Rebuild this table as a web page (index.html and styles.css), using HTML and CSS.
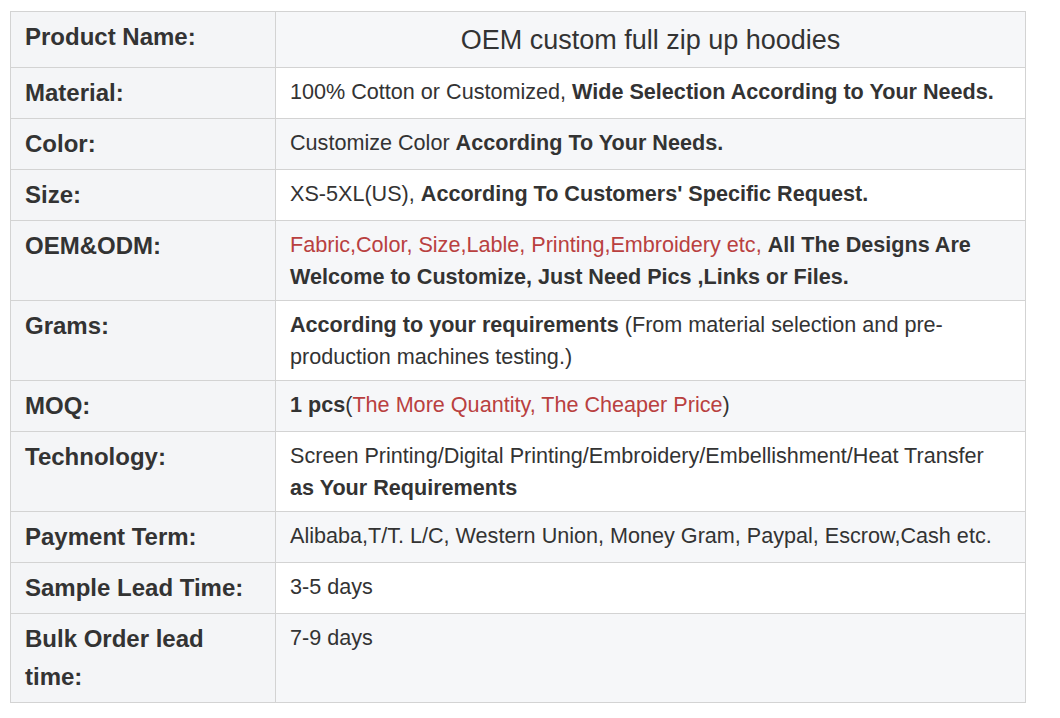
FILE: index.html
```html
<!DOCTYPE html>
<html>
<head>
<meta charset="utf-8">
<link rel="stylesheet" href="styles.css">
</head>
<body>
<table class="spec">
  <tr class="odd">
    <th>Product Name:</th>
    <td class="title">OEM custom full zip up hoodies</td>
  </tr>
  <tr>
    <th>Material:</th>
    <td>100% Cotton or Customized, <b>Wide Selection According to Your Needs.</b></td>
  </tr>
  <tr class="odd">
    <th>Color:</th>
    <td>Customize Color <b>According To Your Needs.</b></td>
  </tr>
  <tr>
    <th>Size:</th>
    <td>XS-5XL(US), <b>According To Customers' Specific Request.</b></td>
  </tr>
  <tr class="odd">
    <th>OEM&amp;ODM:</th>
    <td><span class="red">Fabric,Color, Size,Lable, Printing,Embroidery etc,</span> <b>All The Designs Are Welcome to Customize, Just Need Pics ,Links or Files.</b></td>
  </tr>
  <tr>
    <th>Grams:</th>
    <td><b>According to your requirements</b> (From material selection and pre-production machines testing.)</td>
  </tr>
  <tr class="odd">
    <th>MOQ:</th>
    <td><b>1 pcs</b>(<span class="red">The More Quantity, The Cheaper Price</span>)</td>
  </tr>
  <tr>
    <th>Technology:</th>
    <td>Screen Printing/Digital Printing/Embroidery/Embellishment/Heat Transfer <b>as Your Requirements</b></td>
  </tr>
  <tr class="odd">
    <th>Payment Term:</th>
    <td>Alibaba,T/T. L/C, Western Union, Money Gram, Paypal, Escrow,Cash etc.</td>
  </tr>
  <tr>
    <th>Sample Lead Time:</th>
    <td>3-5 days</td>
  </tr>
  <tr class="odd">
    <th>Bulk Order lead time:</th>
    <td>7-9 days</td>
  </tr>
</table>
</body>
</html>
```
FILE: styles.css
```css
html, body {
  margin: 0;
  padding: 0;
  background: #ffffff;
}
body {
  padding: 11px 10px;
  font-family: "Liberation Sans", Arial, sans-serif;
  color: #333333;
}
.spec {
  border-collapse: collapse;
  width: 1016px;
  table-layout: fixed;
}
.spec th,
.spec td {
  border: 1px solid #d3d3d3;
  vertical-align: top;
  text-align: left;
}
.spec th {
  width: 236px;
  padding: 6px 14px;
  font-size: 24px;
  line-height: 38px;
  font-weight: bold;
  background: #f4f5f7;
}
.spec td {
  padding: 8px 14px 7px;
  font-size: 21.6px;
  line-height: 32px;
  background: #ffffff;
}
.spec tr.odd td {
  background: #f6f7f9;
}
.spec td.title {
  text-align: center;
  font-size: 27px;
  line-height: 40px;
}
.red {
  color: #b94040;
}
```
